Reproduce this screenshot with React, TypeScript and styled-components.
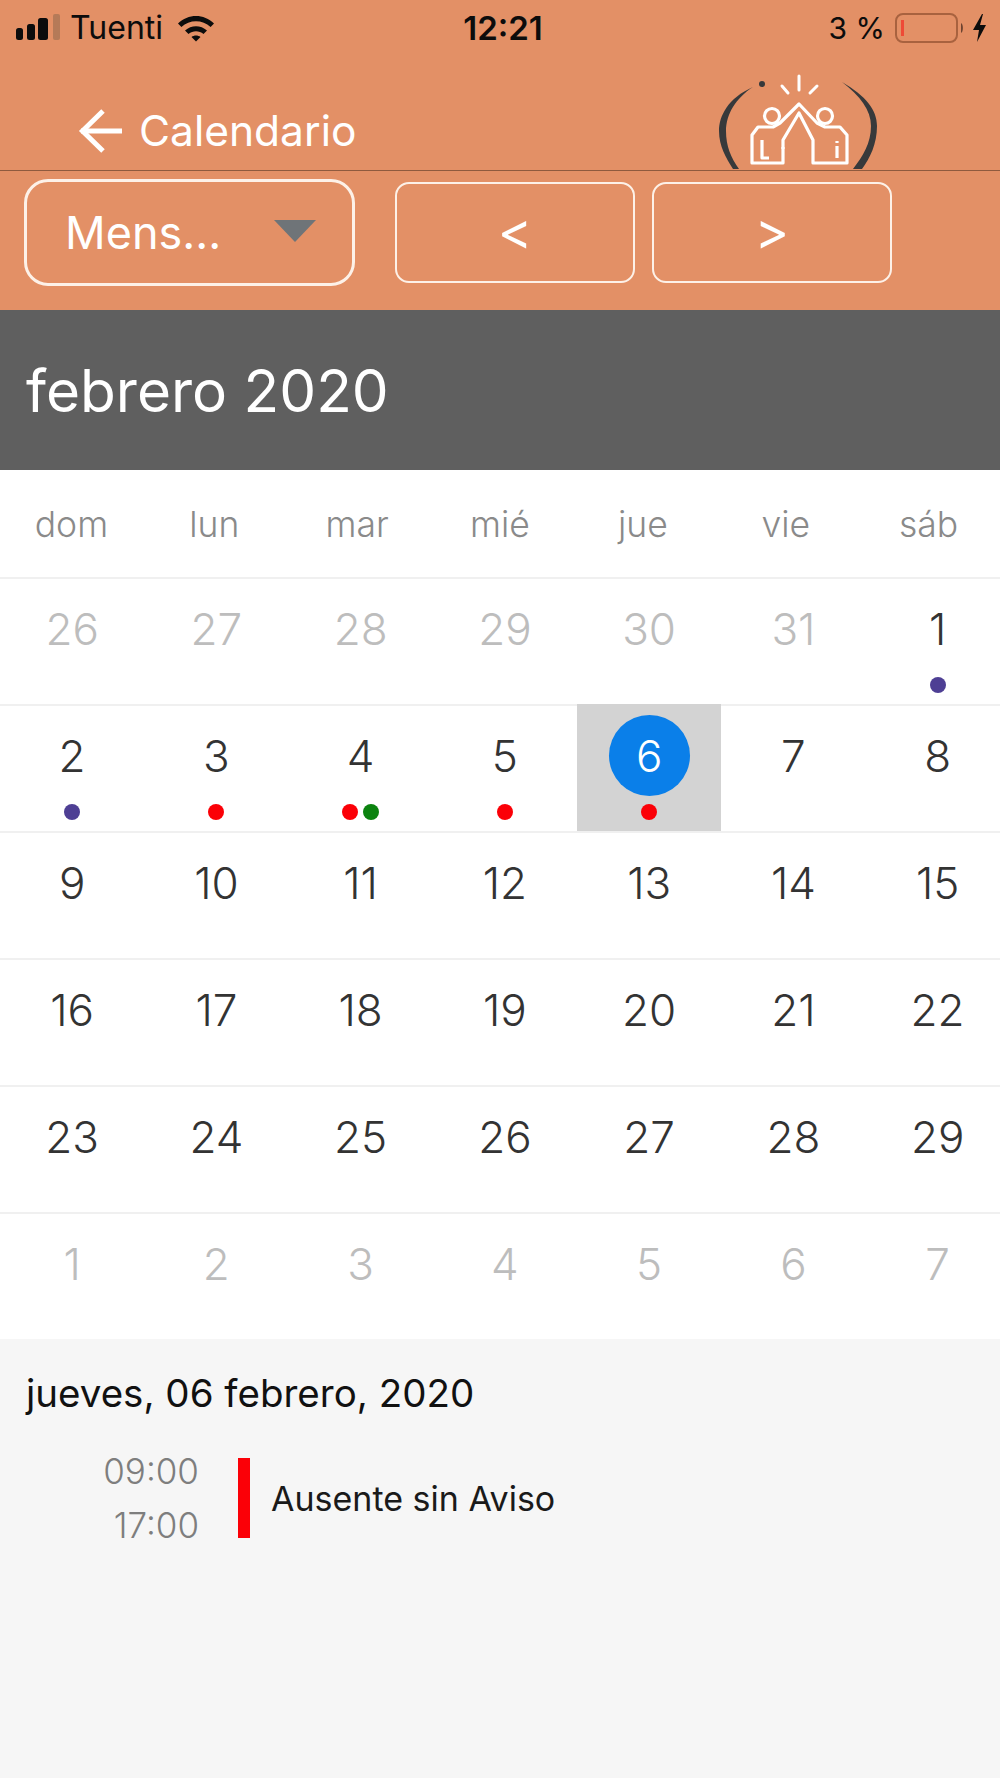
import { FC } from 'react';
import styled, { createGlobalStyle } from 'styled-components';

const GlobalStyle = createGlobalStyle`
  html, body {
    margin: 0;
    padding: 0;
    background: #f6f6f6;
    overflow: hidden;
  }
  * {
    box-sizing: border-box;
  }
`;

type Mark = 'red' | 'green' | 'purple';

interface Day {
  label: number;
  muted?: boolean;
  selected?: boolean;
  marks?: Mark[];
}

const markColors: Record<Mark, string> = {
  red: '#fb0007',
  green: '#0b830f',
  purple: '#4e3f94',
};

const weekDays = ['dom', 'lun', 'mar', 'mié', 'jue', 'vie', 'sáb'];

const days: Day[] = [
  ...[26, 27, 28, 29, 30, 31].map((label) => ({ label, muted: true })),
  { label: 1, marks: ['purple'] },
  { label: 2, marks: ['purple'] },
  { label: 3, marks: ['red'] },
  { label: 4, marks: ['red', 'green'] },
  { label: 5, marks: ['red'] },
  { label: 6, selected: true, marks: ['red'] },
  ...Array.from({ length: 23 }, (_, i) => ({ label: i + 7 })),
  ...[1, 2, 3, 4, 5, 6, 7].map((label) => ({ label, muted: true })),
];

const SignalIcon: FC = () => (
  <svg width="46" height="28" viewBox="0 0 46 28">
    <rect x="0" y="14" width="7" height="12" rx="2.5" fill="#0c0c0c" />
    <rect x="11" y="10" width="8" height="16" rx="2.5" fill="#0c0c0c" />
    <rect x="22" y="4" width="10" height="22" rx="2.5" fill="#0c0c0c" />
    <rect x="37" y="0" width="7" height="26" rx="2" fill="#b57a58" />
  </svg>
);

const WifiIcon: FC = () => (
  <svg width="38" height="28" viewBox="0 0 38 28">
    <path d="M1 9.5C11 -0.5 27 -0.5 37 9.5l-3.4 3.6C25.500 5.300 12.500 5.300 4.400 13.100z" fill="#0c0c0c" />
    <path d="M8 16.500c6.300-5.800 15.700-5.800 22 0l-3.500 3.500c-4.300-3.700-10.700-3.700-15 0z" fill="#0c0c0c" />
    <path d="M14.500 23c2.600-2 6.400-2 9 0L19 27.500z" fill="#0c0c0c" />
  </svg>
);

const BatteryIcon: FC = () => (
  <svg width="96" height="32" viewBox="0 0 96 32">
    <rect x="2" y="2" width="61" height="28" rx="7" fill="none" stroke="#a8623f" strokeWidth="2" />
    <rect x="7" y="8" width="3" height="16" fill="#ee4a36" />
    <path d="M67 11c2.500 1 2.500 9 0 10z" fill="#6d4330" />
    <path d="M88 2 79 18h6l-2 12 9-17h-6l3-11z" fill="#0c0c0c" />
  </svg>
);

const BackArrow: FC = () => (
  <svg width="46" height="46" viewBox="0 0 46 46" fill="none" stroke="#fff" strokeWidth="5">
    <path d="M3 23h41" />
    <path d="M25 3 4.500 23 25 43" />
  </svg>
);

const Logo: FC = () => (
  <svg width="170" height="97" viewBox="715 75 170 97" fill="none">
    <path d="M753 89C728 100 719 118 719 133C719 148 726 160 733 171L739 171C731 160 726 148 726 133C726 116 736 100 753 89z" fill="#37393b" />
    <path d="M842 84C866 98 877 112 877 128C877 146 870 160 862 171L853 171C863 158 871 145 871 128C871 112 860 98 842 84z" fill="#37393b" />
    <circle cx="762" cy="86" r="3" fill="#37393b" />
    <g stroke="#fff" strokeWidth="3" strokeLinecap="round">
      <path d="M799 78v14" />
      <path d="M782 88l6 7" />
      <path d="M817 88l-7 7" />
    </g>
    <g stroke="#fff" strokeWidth="3.200" strokeLinejoin="round">
      <circle cx="772" cy="118" r="7.500" />
      <circle cx="825" cy="118" r="7.500" />
      <path d="M799 106 780 125l-7 4h-15l-6 8v28h31v-23l16-27 14 27v23h34v-28l-7-8h-15l-8-4z" />
      <path d="M762 142v18h7" />
      <path d="M837 148v12" />
      <path d="M837 143v2" />
      <path d="M783 149v2" />
    </g>
  </svg>
);

const App: FC = () => (
  <Page>
    <GlobalStyle />
    <Header>
      <StatusBar>
        <StatusLeft>
          <SignalIcon />
          <Carrier>Tuenti</Carrier>
          <WifiIcon />
        </StatusLeft>
        <Clock>12:21</Clock>
        <StatusRight>
          <Percent>3 %</Percent>
          <BatteryIcon />
        </StatusRight>
      </StatusBar>
      <NavBar>
        <BackLink>
          <BackArrow />
          <NavTitle>Calendario</NavTitle>
        </BackLink>
        <LogoSlot>
          <Logo />
        </LogoSlot>
      </NavBar>
      <Toolbar>
        <ModeSelect>
          <ModeLabel>Mens...</ModeLabel>
          <Caret />
        </ModeSelect>
        <StepButton>&lt;</StepButton>
        <StepButton>&gt;</StepButton>
      </Toolbar>
    </Header>
    <MonthBar>febrero 2020</MonthBar>
    <WeekRow>
      {weekDays.map((day) => (
        <WeekDay key={day}>{day}</WeekDay>
      ))}
    </WeekRow>
    <DayGrid>
      {days.map((day, index) => (
        <DayCell key={index} $selected={day.selected}>
          <DayNumber $muted={day.muted} $selected={day.selected}>
            {day.label}
          </DayNumber>
          <Marks>
            {day.marks?.map((mark, i) => (
              <MarkDot key={i} $color={markColors[mark]} />
            ))}
          </Marks>
        </DayCell>
      ))}
    </DayGrid>
    <Agenda>
      <AgendaDate>jueves, 06 febrero, 2020</AgendaDate>
      <AgendaItem>
        <Times>
          <span>09:00</span>
          <span>17:00</span>
        </Times>
        <ItemBar />
        <ItemTitle>Ausente sin Aviso</ItemTitle>
      </AgendaItem>
    </Agenda>
  </Page>
);

export default App;

const Page = styled.div`
  width: 1000px;
  height: 1778px;
  overflow: hidden;
  font-family: Inter, 'Liberation Sans', sans-serif;
  background: #f6f6f6;
`;

const Header = styled.div`
  background: #e39066;
  height: 310px;
  display: flex;
  flex-direction: column;
`;

const StatusBar = styled.div`
  height: 55px;
  padding: 0 10px 0 16px;
  display: flex;
  align-items: center;
  justify-content: space-between;
  color: #0c0c0c;
`;

const StatusLeft = styled.div`
  width: 300px;
  display: flex;
  align-items: center;
  column-gap: 8px;
`;

const Carrier = styled.span`
  font-size: 32px;
  margin-right: 6px;
`;

const Clock = styled.span`
  font-size: 33px;
  font-weight: 600;
`;

const StatusRight = styled.div`
  width: 300px;
  display: flex;
  align-items: center;
  justify-content: flex-end;
  column-gap: 9px;
`;

const Percent = styled.span`
  font-size: 30px;
`;

const NavBar = styled.div`
  height: 116px;
  border-bottom: 1px solid #8f5a3e;
  padding: 0 115px 0 78px;
  display: flex;
  align-items: flex-end;
  justify-content: space-between;
`;

const BackLink = styled.div`
  display: flex;
  align-items: center;
  column-gap: 15px;
  padding-bottom: 16px;
`;

const NavTitle = styled.span`
  color: #fff;
  font-size: 42.500px;
  line-height: 46px;
`;

const LogoSlot = styled.div`
  display: flex;
  height: 97px;
`;

const Toolbar = styled.div`
  padding: 8px 0 0 24px;
  display: flex;
  align-items: flex-start;
  column-gap: 17px;
`;

const ModeSelect = styled.div`
  width: 331px;
  height: 107px;
  margin-right: 23px;
  padding: 0 36px 0 38px;
  border: 3px solid #fdf1e8;
  border-radius: 24px;
  display: flex;
  align-items: center;
  justify-content: space-between;
`;

const ModeLabel = styled.span`
  color: #fff;
  font-size: 45px;
`;

const Caret = styled.span`
  width: 0;
  height: 0;
  margin-bottom: 4px;
  border-left: 21px solid transparent;
  border-right: 21px solid transparent;
  border-top: 22px solid #6f7478;
`;

const StepButton = styled.div`
  width: 240px;
  height: 101px;
  margin-top: 3px;
  padding-bottom: 4px;
  border: 2px solid #fdf1e8;
  border-radius: 14px;
  color: #fff;
  font-size: 52px;
  display: flex;
  align-items: center;
  justify-content: center;
`;

const MonthBar = styled.div`
  height: 160px;
  background: #5f5f5f;
  color: #fff;
  font-size: 58.500px;
  padding-left: 26px;
  display: flex;
  align-items: center;
`;

const WeekRow = styled.div`
  height: 107px;
  background: #fff;
  display: grid;
  grid-template-columns: repeat(7, 1fr);
  align-items: center;
  padding-top: 2px;
`;

const WeekDay = styled.span`
  text-align: center;
  color: #8a8a8a;
  font-size: 35.500px;
  font-weight: 300;
`;

const DayGrid = styled.div`
  width: 1010px;
  background: #fff;
  display: grid;
  grid-template-columns: repeat(7, 144.25px);
  grid-auto-rows: 127px;
`;

const DayCell = styled.div<{ $selected?: boolean }>`
  background: ${(p) => (p.$selected ? '#d3d3d3' : 'transparent')};
  box-shadow: inset 0 2px 0 ${(p) => (p.$selected ? '#d3d3d3' : '#f0f0f0')};
  padding-top: 11px;
  display: flex;
  flex-direction: column;
  align-items: center;
`;

const DayNumber = styled.span<{ $muted?: boolean; $selected?: boolean }>`
  width: 81px;
  height: 81px;
  border-radius: 50%;
  background: ${(p) => (p.$selected ? '#0a7fe9' : 'transparent')};
  color: ${(p) => (p.$selected ? '#fff' : p.$muted ? '#bdbdbd' : '#333')};
  font-size: 44px;
  font-weight: 300;
  display: flex;
  align-items: center;
  justify-content: center;
`;

const Marks = styled.div`
  margin-top: 8px;
  height: 16px;
  display: flex;
  column-gap: 5px;
`;

const MarkDot = styled.span<{ $color: string }>`
  width: 16px;
  height: 16px;
  border-radius: 50%;
  background: ${(p) => p.$color};
`;

const Agenda = styled.div`
  background: #f6f6f6;
  padding: 32px 0 0 26px;
`;

const AgendaDate = styled.div`
  color: #111;
  font-size: 38.500px;
  line-height: 44px;
`;

const AgendaItem = styled.div`
  margin-top: 36px;
  display: flex;
  align-items: center;
`;

const Times = styled.div`
  width: 173px;
  display: flex;
  flex-direction: column;
  align-items: flex-end;
  row-gap: 14px;
  color: #7e7e7e;
  font-size: 35px;
  line-height: 40px;
  font-weight: 300;
`;

const ItemBar = styled.div`
  width: 12px;
  height: 80px;
  margin-left: 39px;
  background: #fb0007;
`;

const ItemTitle = styled.span`
  margin-left: 21px;
  color: #1a1a1a;
  font-size: 34px;
`;
